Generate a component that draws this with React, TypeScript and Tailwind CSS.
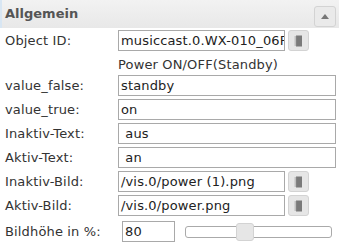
import React from "react";

const font = { fontFamily: '"DejaVu Sans", Verdana, sans-serif' };

function NoteIcon() {
  return (
    <svg width="9" height="12" viewBox="0 0 9 12">
      <rect x="2" y="0.5" width="6" height="11" fill="#7a7a7a" />
      {[1.5, 3.5, 5.5, 7.5, 9.5].map((y) => (
        <rect key={y} x="0.5" y={y} width="2" height="1" fill="#9a9a9a" />
      ))}
    </svg>
  );
}

function PickButton() {
  return (
    <button className="ml-[3px] flex h-[21px] w-[21px] shrink-0 items-center justify-center rounded-[3px] border border-[#d3d3d3] bg-[#e6e6e6]">
      <NoteIcon />
    </button>
  );
}

function Field({ value, w = "w-[218px]" }: { value: string; w?: string }) {
  return (
    <div
      className={`${w} flex h-[21px] shrink-0 items-center overflow-hidden whitespace-pre border border-[#a9a9a9] bg-white pl-[2px] text-[13px] tracking-[0.15px] text-[#222]`}
    >
      {value}
    </div>
  );
}

function Row({
  label,
  children,
  className = "",
}: {
  label: string;
  children: React.ReactNode;
  className?: string;
}) {
  return (
    <div className={`flex h-[24px] items-start ${className}`}>
      <div className="flex h-[21px] w-[118px] shrink-0 items-center pl-[5px] text-[13px] tracking-[0.15px] text-[#333]">
        {label}
      </div>
      {children}
    </div>
  );
}

export default function App() {
  return (
    <div style={font} className="h-[245px] w-[339px] overflow-hidden bg-white">
      {/* header */}
      <div className="flex h-[28px] items-center justify-between border-l-2 border-[#d8e6f3] bg-gradient-to-b from-[#f2f2f2] to-[#e8e8e8] pl-[3px] pr-[3px]">
        <span className="text-[13px] font-bold text-[#555]">Allgemein</span>
        <button className="mt-[5px] flex h-[21px] w-[22px] items-center justify-center rounded-[3px] border border-[#d3d3d3] bg-[#eaeaea]">
          <svg width="8" height="5" viewBox="0 0 8 5">
            <path d="M0 5 L4 0 L8 5 Z" fill="#777" />
          </svg>
        </button>
      </div>

      <div className="pt-[2px]">
        <Row label="Object ID:" className="h-[21px]">
          <Field value="musiccast.0.WX-010_06F" w="w-[167px]" />
          <PickButton />
        </Row>
        <div className="flex h-[21px] items-center pl-[118px] text-[13px] tracking-[0.15px] text-[#333]">
          Power ON/OFF(Standby)
        </div>
        <Row label="value_false:">
          <Field value="standby" />
        </Row>
        <Row label="value_true:">
          <Field value="on" />
        </Row>
        <Row label="Inaktiv-Text:">
          <Field value=" aus" />
        </Row>
        <Row label="Aktiv-Text:">
          <Field value=" an" />
        </Row>
        <Row label="Inaktiv-Bild:">
          <Field value="/vis.0/power (1).png" w="w-[167px]" />
          <PickButton />
        </Row>
        <Row label="Aktiv-Bild:">
          <Field value="/vis.0/power.png" w="w-[167px]" />
          <PickButton />
        </Row>
        <Row label="Bildhöhe in %:" className="mt-[2px]">
          <div className="ml-[4px] flex">
            <Field value="80" w="w-[53px]" />
          </div>
          <div className="relative ml-[10px] mt-[5px] h-[12px] w-[147px] rounded-[3px] border border-[#aaa] bg-white">
            <div className="absolute left-[50px] top-[-4px] h-[18px] w-[18px] rounded-[3px] border border-[#d3d3d3] bg-[#e6e6e6]" />
          </div>
        </Row>
      </div>
    </div>
  );
}
